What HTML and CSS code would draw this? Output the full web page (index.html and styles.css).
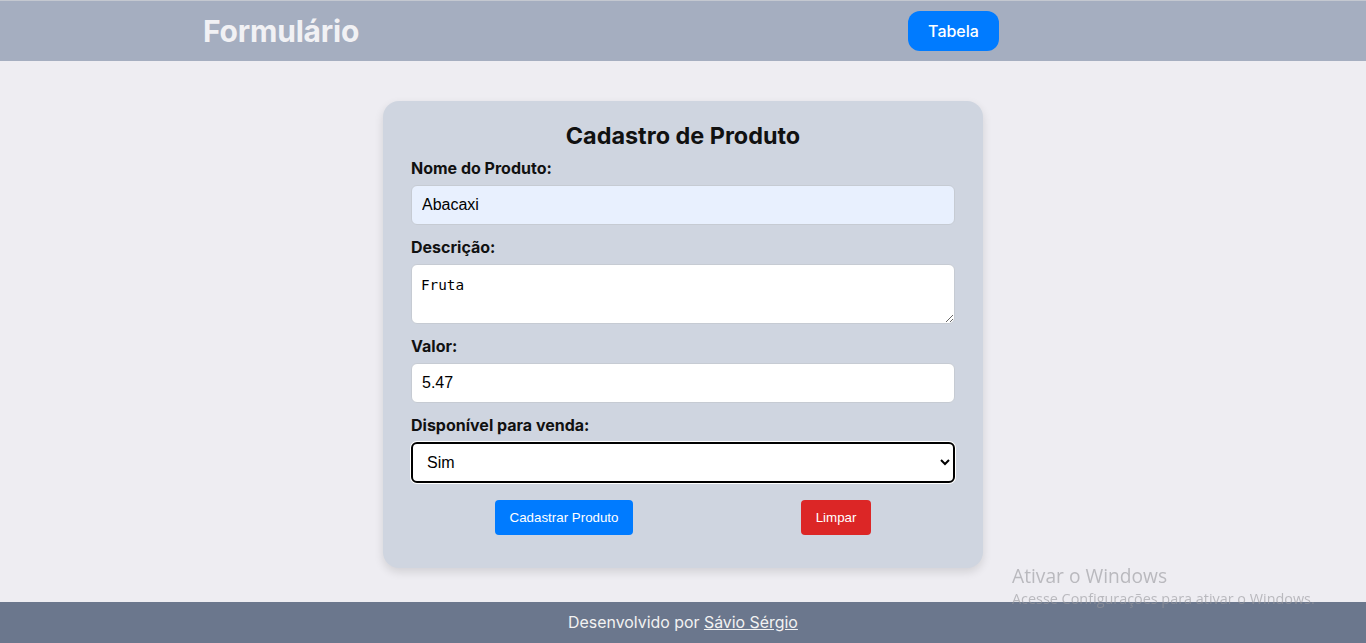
FILE: index.html
```html
<!DOCTYPE html>
<html lang="pt-BR">
<head>
<meta charset="UTF-8">
<title>Formulário</title>
<link rel="stylesheet" href="styles.css">
</head>
<body>
<header class="topbar">
  <h1 class="brand">Formulário</h1>
  <a class="nav-btn" href="#">Tabela</a>
</header>
<main class="main">
  <form class="card">
    <h2 class="card-title">Cadastro de Produto</h2>
    <label class="field-label" for="nome">Nome do Produto:</label>
    <input class="field autofill" id="nome" type="text" value="Abacaxi">
    <label class="field-label" for="desc">Descrição:</label>
    <textarea class="field area" id="desc">Fruta</textarea>
    <label class="field-label" for="valor">Valor:</label>
    <input class="field" id="valor" type="text" value="5.47">
    <label class="field-label" for="disp">Disponível para venda:</label>
    <select class="field select focused" id="disp">
      <option>Sim</option>
      <option>Não</option>
    </select>
    <div class="actions">
      <button type="button" class="btn btn-blue">Cadastrar Produto</button>
      <button type="button" class="btn btn-red">Limpar</button>
    </div>
  </form>
</main>
<footer class="footer">
  <span>Desenvolvido por <a class="footer-link" href="#">Sávio Sérgio</a></span>
</footer>
<div class="watermark">
  <div class="wm-title">Ativar o Windows</div>
  <div class="wm-sub">Acesse Configurações para ativar o Windows.</div>
</div>
</body>
</html>
```
FILE: styles.css
```css
* { box-sizing: border-box; }
html, body { margin: 0; padding: 0; height: 100%; }
body {
  font-family: Inter, "Noto Sans", sans-serif;
  background: #eeedf2;
  color: #111;
  display: flex;
  flex-direction: column;
  min-height: 643px;
}
.topbar {
  height: 61px;
  background: #a5aec0;
  border-top: 1px solid #c4c8d0;
  display: flex;
  align-items: center;
  justify-content: space-between;
  padding: 0 367px 0 203px;
}
.brand {
  margin: 0;
  font-size: 30px;
  font-weight: 700;
  color: #f1f1f4;
  letter-spacing: -0.2px;
}
.nav-btn {
  display: inline-flex;
  align-items: center;
  justify-content: center;
  width: 91px;
  height: 40px;
  background: #007bff;
  color: #fff;
  text-decoration: none;
  border-radius: 12px;
  font-size: 16px;
  font-weight: 500;
}
.main {
  flex: 1;
  display: flex;
  justify-content: center;
  align-items: flex-start;
  padding-top: 40px;
}
.card {
  width: 600px;
  background: #cfd5e0;
  border-radius: 16px;
  box-shadow: 0 4px 10px rgba(0,0,0,0.12);
  padding: 20px 28px 33px;
  display: flex;
  flex-direction: column;
}
.card-title {
  margin: 0 0 8px;
  text-align: center;
  font-size: 23.4px;
  font-weight: 700;
  color: #111;
}
.field-label {
  font-size: 16px;
  font-weight: 700;
  color: #111;
  margin-bottom: 7px;
}
.field {
  width: 100%;
  height: 40px;
  padding: 10px;
  font-family: "Liberation Sans", Arial, sans-serif;
  font-size: 16px;
  color: #000;
  background: #fff;
  border: 1px solid #c6cbd3;
  border-radius: 6px;
  margin-bottom: 12px;
  outline: none;
}
.autofill { background: #e8f0fe; }
.area {
  height: 60px;
  font-family: "DejaVu Sans Mono", monospace;
  font-size: 14.3px;
  line-height: 20px;
  padding: 10px 9px;
  resize: vertical;
}
.select {
  height: 41px;
  padding: 8px 10px;
  appearance: auto;
}
.focused {
  border: 2px solid #000;
  box-shadow: 0 0 0 1px #fff;
}
.actions {
  display: flex;
  justify-content: space-around;
  margin-top: 5px;
}
.btn {
  font-family: "Liberation Sans", Arial, sans-serif;
  font-size: 13.333px;
  color: #fff;
  border: none;
  border-radius: 4px;
  padding: 10px 15px;
  height: 35px;
  cursor: pointer;
}
.btn-blue { background: #007bff; }
.btn-red { background: #dc2626; }
.footer {
  height: 41px;
  background: #6b778d;
  color: #f2f2f2;
  display: flex;
  align-items: center;
  justify-content: center;
  font-size: 15.9px;
}
.footer-link { color: #f2f2f2; }
.watermark {
  position: fixed;
  left: 1012px;
  top: 563px;
  font-family: "Open Sans", "Noto Sans", sans-serif;
  color: rgba(150,150,155,0.6);
  pointer-events: none;
}
.wm-title { font-size: 19.2px; line-height: 25px; }
.wm-sub { font-size: 14.4px; line-height: 22px; }
```
